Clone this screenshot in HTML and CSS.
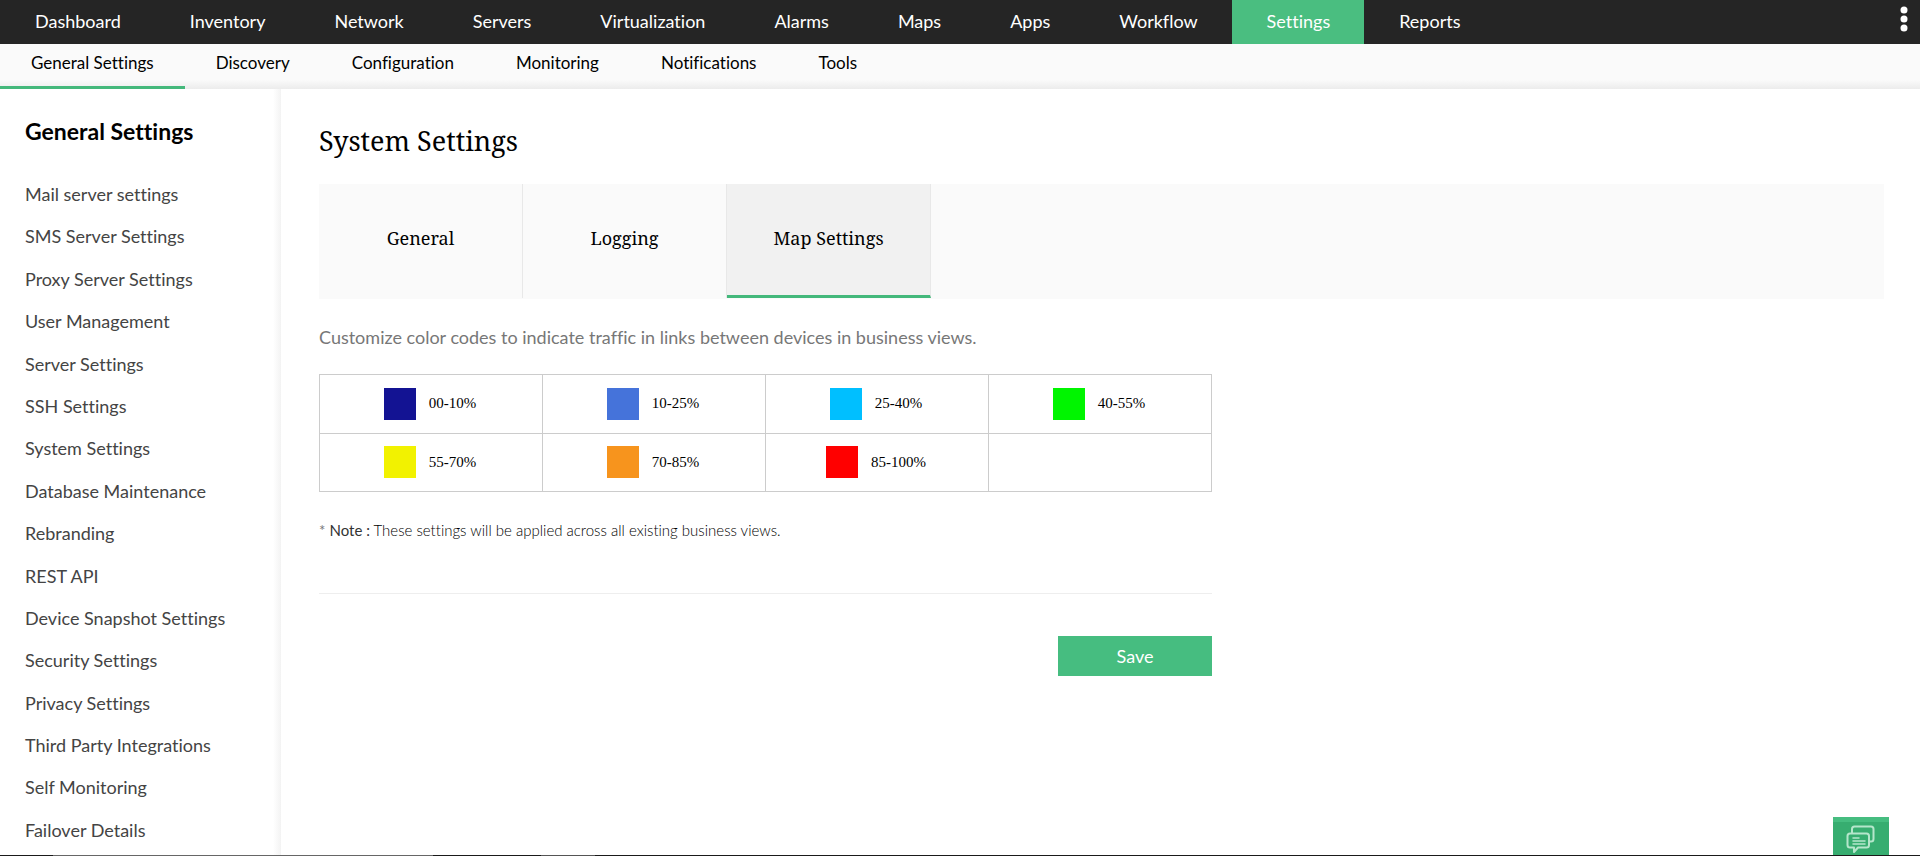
FILE: index.html
```
<!DOCTYPE html>
<html lang="en">

<head>
  <meta charset="UTF-8">
  <meta name="viewport" content="width=device-width, initial-scale=1.0">
  <title>System Settings</title>
  <link rel="stylesheet" href="styles.css">
</head>

<body>
  <header>
    <nav class="main-nav" aria-label="Main">
      <a href="#">Dashboard</a>
      <a href="#">Inventory</a>
      <a href="#">Network</a>
      <a href="#">Servers</a>
      <a href="#">Virtualization</a>
      <a href="#">Alarms</a>
      <a href="#">Maps</a>
      <a href="#">Apps</a>
      <a href="#">Workflow</a>
      <a href="#" class="active">Settings</a>
      <a href="#">Reports</a>
      <button type="button" class="more-btn" aria-label="More">
        <svg width="8" height="30" viewBox="0 0 8 30" fill="#fff">
          <circle cx="4" cy="4" r="3.5" />
          <circle cx="4" cy="13" r="3.5" />
          <circle cx="4" cy="22" r="3.5" />
        </svg>
      </button>
    </nav>
    <nav class="sub-nav" aria-label="Settings">
      <a href="#" class="active">General Settings</a>
      <a href="#">Discovery</a>
      <a href="#">Configuration</a>
      <a href="#">Monitoring</a>
      <a href="#">Notifications</a>
      <a href="#">Tools</a>
    </nav>
  </header>

  <div class="page">
    <aside class="sidebar">
      <h2>General Settings</h2>
      <ul>
        <li><a href="#">Mail server settings</a></li>
        <li><a href="#">SMS Server Settings</a></li>
        <li><a href="#">Proxy Server Settings</a></li>
        <li><a href="#">User Management</a></li>
        <li><a href="#">Server Settings</a></li>
        <li><a href="#">SSH Settings</a></li>
        <li><a href="#">System Settings</a></li>
        <li><a href="#">Database Maintenance</a></li>
        <li><a href="#">Rebranding</a></li>
        <li><a href="#">REST API</a></li>
        <li><a href="#">Device Snapshot Settings</a></li>
        <li><a href="#">Security Settings</a></li>
        <li><a href="#">Privacy Settings</a></li>
        <li><a href="#">Third Party Integrations</a></li>
        <li><a href="#">Self Monitoring</a></li>
        <li><a href="#">Failover Details</a></li>
      </ul>
    </aside>

    <main class="content">
      <h1>System Settings</h1>
      <div class="tabs">
        <button type="button">General</button>
        <button type="button">Logging</button>
        <button type="button" class="active">Map Settings</button>
      </div>
      <p class="intro">Customize color codes to indicate traffic in links between devices in business views.</p>

      <form class="map-form">
        <table class="color-table">
          <tr>
            <td><label><input type="color" value="#131393">00-10%</label></td>
            <td><label><input type="color" value="#4573da">10-25%</label></td>
            <td><label><input type="color" value="#00bfff">25-40%</label></td>
            <td><label><input type="color" value="#00f500">40-55%</label></td>
          </tr>
          <tr>
            <td><label><input type="color" value="#f2f200">55-70%</label></td>
            <td><label><input type="color" value="#f7941d">70-85%</label></td>
            <td><label><input type="color" value="#ff0000">85-100%</label></td>
            <td></td>
          </tr>
        </table>
        <p class="note"><span class="star">*</span> <b>Note :</b> These settings will be applied across all existing business views.</p>
        <div class="form-footer">
          <button type="button" class="save-btn">Save</button>
        </div>
      </form>
    </main>
  </div>

  <button type="button" class="chat-btn" aria-label="Chat">
    <svg width="30" height="30" viewBox="0 0 30 30" fill="none" stroke="#b5e6cb" stroke-width="2" stroke-linejoin="round" stroke-linecap="round">
      <path d="M6 8 V4 Q6 1.500 8.500 1.500 H25 Q27.500 1.500 27.500 4 V14 Q27.500 16.500 25 16.500 H24" />
      <path d="M4 8.500 H20.500 Q23 8.500 23 11 V20 Q23 22.500 20.500 22.500 H12 L8 27 V22.500 H4 Q1.500 22.500 1.500 20 V11 Q1.500 8.500 4 8.500 Z" />
      <path d="M7 13 H13 M7 16 H19 M7 19 H19" stroke-width="1.500" />
    </svg>
  </button>
  <div class="bottom-line"></div>
</body>

</html>
```

FILE: styles.css
```
* {
  box-sizing: border-box;
}

body {
  margin: 0;
  min-height: 100vh;
  display: flex;
  flex-direction: column;
  background: #fff;
  color: #000;
  font-family: Lato, sans-serif;
  font-size: 18px;
  font-variant-ligatures: none;
}

a {
  color: inherit;
  text-decoration: none;
}

button {
  border: 0;
  padding: 0;
  font: inherit;
  cursor: pointer;
}

.main-nav {
  display: flex;
  height: 44px;
  background: #252525;
  color: #fff;
}

.main-nav a {
  padding: 0 34px 0 35px;
  line-height: 42px;
}

.main-nav .active {
  background: #4abe80;
}

.more-btn {
  margin-left: auto;
  padding: 2px 12px 0 0;
  background: none;
}

.sub-nav {
  display: flex;
  height: 45px;
  background: linear-gradient(#fafafa 36px, #ececec);
  font-size: 17px;
}

.sub-nav a {
  padding: 0 31px;
  line-height: 38px;
}

.sub-nav .active {
  border-bottom: 3px solid #44b87b;
}

.page {
  flex: 1;
  display: flex;
}

.sidebar {
  flex: 0 0 281px;
  display: flex;
  flex-direction: column;
  padding: 27px 25px 14px;
  background: linear-gradient(to left, #f3f3f3, #fff 8px);
}

.sidebar h2 {
  margin: 0;
  font-size: 23px;
  line-height: 30px;
}

.sidebar ul {
  flex: 1;
  display: flex;
  flex-direction: column;
  justify-content: space-between;
  margin: 36px 0 0;
  padding: 0;
  list-style: none;
  color: #444;
}

.sidebar li {
  line-height: 24px;
}

.content {
  flex: 1;
  padding: 35px 36px 0 38px;
}

.content h1 {
  margin: 0 0 26px;
  font-family: "Droid Serif", "Noto Serif", "DejaVu Serif Condensed", serif;
  font-size: 27px;
  font-weight: normal;
  line-height: 34px;
}

.tabs {
  display: flex;
  height: 115px;
  padding-bottom: 1px;
  background: #fafafa;
}

.tabs button {
  width: 204px;
  padding-bottom: 6px;
  border-right: 1px solid #e8e8e8;
  background: none;
  font-family: "Droid Serif", "Noto Serif", "DejaVu Serif Condensed", serif;
}

.tabs .active {
  padding-bottom: 3px;
  border-bottom: 3px solid #44b87b;
  background: #f1f1f1;
}

.intro {
  margin: 26px 0 24px;
  color: #777;
  line-height: 25px;
}

.map-form {
  max-width: 893px;
}

.color-table {
  width: 100%;
  height: 118px;
  table-layout: fixed;
  border-collapse: collapse;
  font-family: "Liberation Serif", serif;
  font-size: 15px;
}

.color-table td {
  height: 58px;
  padding: 0 2px 0 0;
  border: 1px solid #ccc;
}

.color-table label {
  display: flex;
  align-items: center;
  justify-content: center;
  gap: 13px;
}

.color-table input {
  width: 32px;
  height: 32px;
  padding: 0;
  border: 0;
  background: none;
}

.color-table input::-webkit-color-swatch-wrapper {
  padding: 0;
}

.color-table input::-webkit-color-swatch {
  border: 0;
}

.note {
  margin: 28px 0 52px;
  font-size: 15px;
  font-weight: 300;
  line-height: 21px;
}

.note b {
  color: #333;
  font-weight: normal;
}

.note .star {
  color: #777;
  font-weight: normal;
}

.form-footer {
  display: flex;
  justify-content: flex-end;
  padding-top: 42px;
  border-top: 1px solid #eee;
}

.save-btn {
  width: 154px;
  height: 40px;
  background: #46bd80;
  color: #fff;
}

.chat-btn {
  position: fixed;
  right: 31px;
  bottom: 0;
  width: 56px;
  height: 39px;
  padding-top: 3px;
  border-top: 5px solid #46bd80;
  background: #37ad70;
}

.bottom-line {
  position: fixed;
  left: 0;
  right: 0;
  bottom: 0;
  height: 1px;
  background: linear-gradient(to right, #1a1a1a 53px, #666 53px 433px, #1a1a1a 433px 541px, #555 541px 595px, #1a1a1a 595px);
}
```
